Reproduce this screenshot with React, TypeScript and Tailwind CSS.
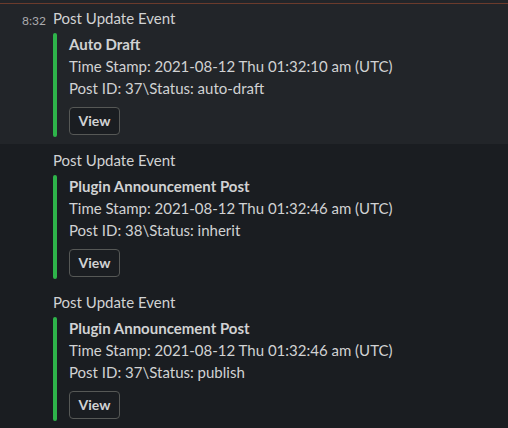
import React from "react"

interface EventItem {
  time?: string
  title: string
  stamp: string
  postId: string
  status: string
  hover?: boolean
}

const events: EventItem[] = [
  { time: "8:32", title: "Auto Draft", stamp: "2021-08-12 Thu 01:32:10 am (UTC)", postId: "37", status: "auto-draft", hover: true },
  { title: "Plugin Announcement Post", stamp: "2021-08-12 Thu 01:32:46 am (UTC)", postId: "38", status: "inherit" },
  { title: "Plugin Announcement Post", stamp: "2021-08-12 Thu 01:32:46 am (UTC)", postId: "37", status: "publish" },
]

const Message = ({ item, first }: { item: EventItem; first: boolean }) => {
  return (
    <div className={`flex ${first ? "pt-[3px]" : "pt-[5px]"} pb-[7px] ${item.hover ? "bg-[#222529]" : "bg-[#1a1d21]"}`}>
      <div className="w-[54px] shrink-0 pr-[8px] text-right">
        {item.time && (
          <span className="text-[12px] leading-[22px] text-[#ababad]">{item.time}</span>
        )}
      </div>
      <div className="flex flex-col">
        <div className="text-[15px] leading-[22px] text-[#d1d2d3] -ml-px">Post Update Event</div>
        <div className="mt-[4px] flex -ml-[1px]">
          <div className="w-[4px] rounded-[8px] bg-[#2eb44a]" />
          <div className="pl-[12px] flex flex-col text-[15px] leading-[22px] text-[#d1d2d3]">
            <div className="font-bold">{item.title}</div>
            <div>Time Stamp: {item.stamp}</div>
            <div>Post ID: {item.postId}\Status: {item.status}</div>
            <div className="mt-[8px] mb-[2px]">
              <button className="h-[28px] w-[51px] rounded-[4px] border border-[#565856] bg-[#1a1d21] text-[14px] font-bold text-[#d1d2d3]">
                View
              </button>
            </div>
          </div>
        </div>
      </div>
    </div>
  )
}

export default function App() {
  return (
    <div className="w-[508px] h-[428px] overflow-hidden bg-[#1a1d21]" style={{ fontFamily: "Lato, 'Noto Sans', sans-serif" }}>
      <div className="h-[3px] bg-[#222529]" />
      <div className="h-px bg-[#6b3b2c]" />
      {events.map((e, i) => (
        <Message key={i} item={e} first={i === 0} />
      ))}
    </div>
  )
}
